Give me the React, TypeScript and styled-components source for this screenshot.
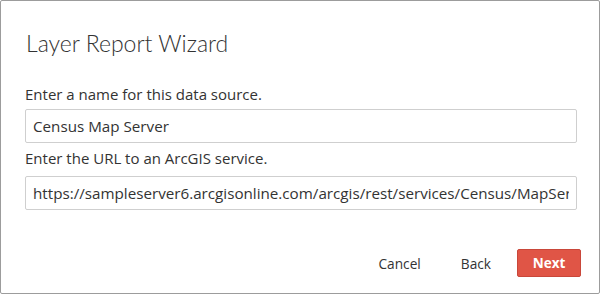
import React from "react";
import styled, { createGlobalStyle } from "styled-components";

const Global = createGlobalStyle`
  html, body { margin: 0; padding: 0; background: #ffffff; }
  body { font-family: "Open Sans", "Noto Sans", sans-serif; }
`;

const Dialog = styled.div`
  box-sizing: border-box;
  width: 600px;
  height: 294px;
  border: 1px solid #9c9c9c;
  border-radius: 2px;
  background: #fff;
  display: flex;
  flex-direction: column;
`;

const Header = styled.div`
  padding: 27px 25px 0 25px;
  height: 60px;
  box-sizing: border-box;
`;

const Title = styled.h1`
  margin: 0;
  font-family: "Lato", "Open Sans", sans-serif;
  font-size: 23px;
  font-weight: 300;
  color: #333;
  line-height: 30px;
`;

const Body = styled.div`
  padding: 23px 22px 0 24px;
  display: flex;
  flex-direction: column;
`;

const Label = styled.label<{ $first?: boolean }>`
  font-size: 15px;
  color: #333;
  line-height: 20px;
  margin-top: ${(p) => (p.$first ? "0" : "5px")};
  margin-bottom: ${(p) => (p.$first ? "5px" : "8px")};
`;

const Input = styled.input`
  box-sizing: border-box;
  height: 34px;
  width: 552px;
  border: 1px solid #cfcfcf;
  border-radius: 2px;
  padding: 0 7px;
  font-family: inherit;
  font-size: 15.2px;
  color: #333;
  outline: none;
`;

const Footer = styled.div`
  margin-top: auto;
  padding: 0 18px 16px 0;
  display: flex;
  justify-content: flex-end;
  align-items: center;
`;

const TextButton = styled.button`
  background: none;
  border: none;
  font-family: inherit;
  font-size: 13.7px;
  color: #333;
  height: 28px;
  padding: 0 20px;
  cursor: pointer;
`;

const PrimaryButton = styled.button`
  background: #e05546;
  border: 1px solid #c9473a;
  border-radius: 2px;
  color: #fff;
  font-family: inherit;
  font-weight: 700;
  font-size: 13.5px;
  height: 28px;
  width: 64px;
  margin-left: 6px;
  cursor: pointer;
`;

export default function App() {
  return (
    <>
      <Global />
      <Dialog>
        <Header>
          <Title>Layer Report Wizard</Title>
        </Header>
        <Body>
          <Label $first>Enter a name for this data source.</Label>
          <Input defaultValue="Census Map Server" />
          <Label>Enter the URL to an ArcGIS service.</Label>
          <Input defaultValue="https://sampleserver6.arcgisonline.com/arcgis/rest/services/Census/MapServer" />
        </Body>
        <Footer>
          <TextButton>Cancel</TextButton>
          <TextButton>Back</TextButton>
          <PrimaryButton>Next</PrimaryButton>
        </Footer>
      </Dialog>
    </>
  );
}
